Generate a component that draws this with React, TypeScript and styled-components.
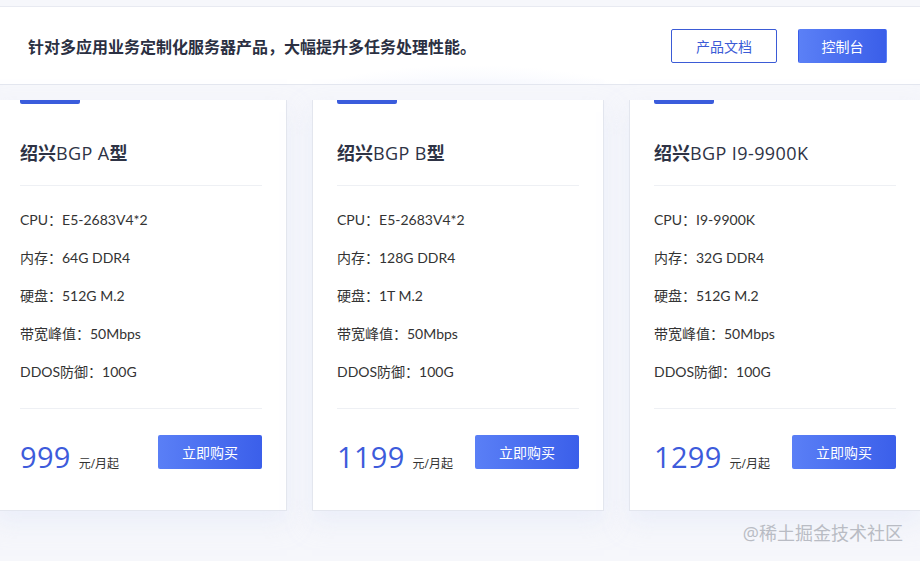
import React from 'react';
import styled, { createGlobalStyle } from 'styled-components';

const GlobalStyle = createGlobalStyle`
    html, body {
        margin: 0;
        padding: 0;
        background: #f6f7fb;
        font-family: 'Open Sans', 'Noto Sans CJK SC', sans-serif;
        color: #333;
    }
`;

interface Product {
    name: string;
    model: string;
    cpu: string;
    memory: string;
    disk: string;
    bandwidth: string;
    ddos: string;
    price: string;
}

const PRODUCTS: Product[] = [
    {
        name: 'BGP A',
        model: '型',
        cpu: 'E5-2683V4*2',
        memory: '64G DDR4',
        disk: '512G M.2',
        bandwidth: '50Mbps',
        ddos: '100G',
        price: '999',
    },
    {
        name: 'BGP B',
        model: '型',
        cpu: 'E5-2683V4*2',
        memory: '128G DDR4',
        disk: '1T M.2',
        bandwidth: '50Mbps',
        ddos: '100G',
        price: '1199',
    },
    {
        name: 'BGP I9-9900K',
        model: '',
        cpu: 'I9-9900K',
        memory: '32G DDR4',
        disk: '512G M.2',
        bandwidth: '50Mbps',
        ddos: '100G',
        price: '1299',
    },
];

const Page = styled.div`
    position: relative;
    height: 561px;
    overflow: hidden;
    padding-top: 6px;
    box-sizing: border-box;
`;

const Banner = styled.header`
    height: 79px;
    box-sizing: border-box;
    display: flex;
    align-items: center;
    justify-content: space-between;
    padding: 0 33px 0 28px;
    border-top: 1px solid #e8eaf1;
    border-bottom: 1px solid #e4e7ef;
    background:
        radial-gradient(ellipse 260px 60px at 470px 100px, rgba(236, 240, 252, 0.9), rgba(255, 255, 255, 0) 70%),
        #fff;
`;

const Slogan = styled.h1`
    margin: 0;
    font-size: 16px;
    font-weight: 700;
    color: #2b3042;
`;

const Actions = styled.div`
    display: flex;
    gap: 21px;
`;

const HeadButton = styled.button<{ $primary?: boolean }>`
    height: 34px;
    width: ${p => (p.$primary ? '89px' : '106px')};
    border-radius: 2px;
    font-family: inherit;
    font-size: 14px;
    cursor: pointer;
    border: 1px solid ${p => (p.$primary ? 'transparent' : '#3b5bd6')};
    color: ${p => (p.$primary ? '#fff' : '#3b5bd6')};
    background: ${p => (p.$primary ? 'linear-gradient(90deg, #5b80f6, #3a5ee9)' : '#fff')};
`;

const CardRow = styled.div`
    display: flex;
    gap: 25px;
    width: 940px;
    margin: 15px 0 0 -5px;
`;

const Card = styled.section`
    flex: 0 0 292px;
    height: 411px;
    box-sizing: border-box;
    padding: 0 24px;
    background: #fff;
    border: 1px solid #e3e6ee;
    border-top: none;
    box-shadow: 0 12px 22px rgba(226, 232, 247, 0.55);
    display: flex;
    flex-direction: column;
`;

const Accent = styled.div`
    width: 60px;
    height: 4px;
    background: #3a5cdc;
    border-radius: 0 0 2px 2px;
`;

const Title = styled.h2`
    margin: 37px 0 0;
    font-size: 18px;
    line-height: 24px;
    font-weight: 400;
    color: #2e3345;
    letter-spacing: 0.4px;
    padding-bottom: 20px;
    border-bottom: 1px solid #eef0f4;

    b {
        font-weight: 700;
        letter-spacing: 0;
    }
`;

const Specs = styled.ul`
    list-style: none;
    margin: 15px 0 0;
    padding: 0 0 17px;
    border-bottom: 1px solid #eef0f4;
`;

const Spec = styled.li`
    font-family: Lato, 'Noto Sans CJK SC', sans-serif;
    font-size: 14px;
    line-height: 38px;
    color: #333;
`;

const Footer = styled.div`
    display: flex;
    align-items: flex-start;
    justify-content: space-between;
    margin-top: 26px;
`;

const Price = styled.div`
    display: flex;
    align-items: baseline;
    gap: 8px;
    padding-top: 5px;
`;

const Amount = styled.span`
    font-size: 29px;
    line-height: 34px;
    color: #3d5bdb;
    letter-spacing: 0.3px;
`;

const Unit = styled.span`
    font-size: 12px;
    color: #333;
`;

const BuyButton = styled.button`
    width: 104px;
    height: 34px;
    border: none;
    border-radius: 2px;
    font-family: inherit;
    font-size: 14px;
    color: #fff;
    background: linear-gradient(90deg, #5a7ff6, #3b5fea);
    cursor: pointer;
`;

const Watermark = styled.div`
    position: absolute;
    right: 17px;
    bottom: 16px;
    font-size: 18px;
    color: #b9bcc4;
`;

const ProductCard = ({ product }: { product: Product }): JSX.Element => (
    <Card>
        <Accent />
        <Title>
            <b>绍兴</b>
            {product.name}
            {product.model && <b>{product.model}</b>}
        </Title>
        <Specs>
            <Spec>{`CPU：${product.cpu}`}</Spec>
            <Spec>{`内存：${product.memory}`}</Spec>
            <Spec>{`硬盘：${product.disk}`}</Spec>
            <Spec>{`带宽峰值：${product.bandwidth}`}</Spec>
            <Spec>{`DDOS防御：${product.ddos}`}</Spec>
        </Specs>
        <Footer>
            <Price>
                <Amount>{product.price}</Amount>
                <Unit>元/月起</Unit>
            </Price>
            <BuyButton>立即购买</BuyButton>
        </Footer>
    </Card>
);

const App = (): JSX.Element => (
    <Page>
        <GlobalStyle />
        <Banner>
            <Slogan>针对多应用业务定制化服务器产品，大幅提升多任务处理性能。</Slogan>
            <Actions>
                <HeadButton>产品文档</HeadButton>
                <HeadButton $primary>控制台</HeadButton>
            </Actions>
        </Banner>
        <CardRow>
            {PRODUCTS.map(p => (
                <ProductCard key={p.price} product={p} />
            ))}
        </CardRow>
        <Watermark>@稀土掘金技术社区</Watermark>
    </Page>
);

export default App;
